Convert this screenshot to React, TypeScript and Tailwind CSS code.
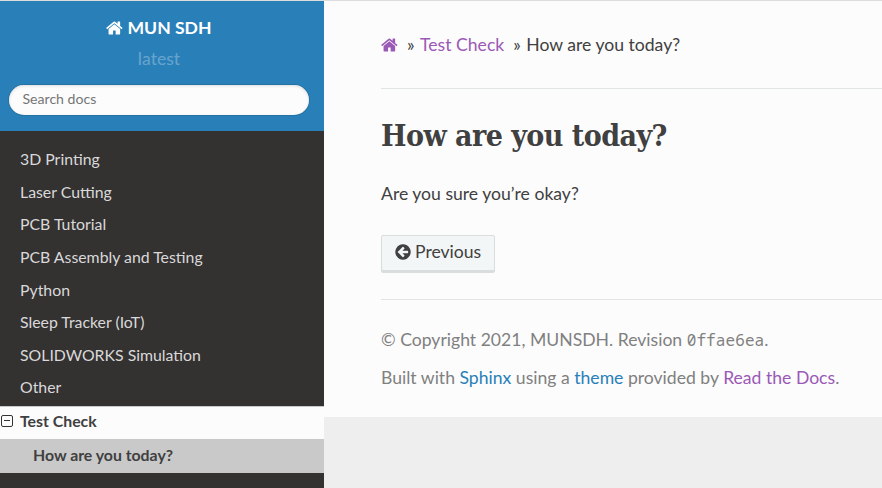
const HOME =
  "M1408 992v480q0 26-19 45t-45 19h-384v-384h-256v384h-384q-26 0-45-19t-19-45v-480q0-1 .5-3t.5-3l575-474 575 474q1 2 1 6zm223-69l-62 74q-8 9-21 11h-3q-13 0-21-7l-692-577-692 577q-12 8-24 7-13-2-21-11l-62-74q-8-10-7-23.5t11-21.5l719-599q32-26 76-26t76 26l244 204v-195q0-14 9-23t23-9h192q14 0 23 9t9 23v408l219 182q10 8 11 21.5t-7 23.5z";
const ARROW =
  "M1408 960v-128q0-26-19-45t-45-19h-502l189-189q19-19 19-45t-19-45l-91-91q-18-18-45-18t-45 18l-362 362-91 91q-18 18-18 45t18 45l91 91 362 362q18 18 45 18t45-18l91-91q18-18 18-45t-18-45l-189-189h502q26 0 45-19t19-45zm256-64q0 209-103 385.5t-279.5 279.5-385.5 103-385.5-103-279.5-279.5-103-385.5 103-385.5 279.5-279.5 385.5-103 385.5 103 279.5 279.5 103 385.5z";

function Icon({ d, className }: { d: string; className: string }) {
  return (
    <svg viewBox="0 0 1792 1792" fill="currentColor" className={className}>
      <path d={d} />
    </svg>
  );
}

const items = [
  "3D Printing",
  "Laser Cutting",
  "PCB Tutorial",
  "PCB Assembly and Testing",
  "Python",
  "Sleep Tracker (IoT)",
  "SOLIDWORKS Simulation",
  "Other",
];

function Sidebar() {
  return (
    <nav className="flex w-[324px] shrink-0 flex-col bg-[#343131]">
      <div className="flex h-[130px] flex-col items-center bg-[#2980b9] pr-[6px]">
        <a className="mt-[14px] flex h-[26px] items-center text-[17.6px] font-bold text-white">
          <Icon d={HOME} className="mr-[3px] size-[18px]" />
          MUN SDH
        </a>
        <div className="mt-[5px] h-[26px] text-[17.6px] leading-[26px] text-white/30">latest</div>
        <div className="mt-[13px] ml-[9px] h-[30px] w-[300px] self-start rounded-full bg-[#fcfcfc] px-[13.5px] text-[14.1px] leading-[28px] text-[#757575] shadow-[inset_0_1px_3px_#ddd,0_0_0_1px_#2472a4]">
          Search docs
        </div>
      </div>
      <ul className="mt-[12px] h-[263px] text-[15.84px] text-[#d9d9d9]">
        {items.map((t) => (
          <li key={t} className="flex h-[32.55px] items-center pl-[20px]">
            {t}
          </li>
        ))}
      </ul>
      <div className="flex h-[33px] items-center border-t border-[#c9c9c9] bg-[#fcfcfc] pb-[4px] text-[15.84px] font-bold text-[#404040]">
        <svg viewBox="0 0 14 14" className="mr-[6px] size-[14px]" fill="none" stroke="#333">
          <rect x="1.5" y="1.5" width="11" height="11" rx="1.5" />
          <path d="M4 6.5h6" />
        </svg>
        Test Check
      </div>
      <div className="flex h-[34px] items-center bg-[#c9c9c9] pb-[2px] pl-[33px] text-[15.84px] font-bold text-[#404040]">
        How are you today?
      </div>
    </nav>
  );
}

export default function App() {
  return (
    <div className="flex h-[488px] w-[882px] flex-col overflow-hidden bg-[#fcfcfc] font-['Lato',sans-serif] text-[17.6px] text-[#404040]">
      <div className="h-px shrink-0 bg-[#dcdcdc]" />
      <div className="flex min-h-0 flex-1">
        <Sidebar />
        <main className="flex flex-1 flex-col">
          <div className="flex h-[416px] flex-col bg-[#fcfcfc] pl-[57px]">
            <div className="mt-[31px] flex h-[26px] items-center whitespace-pre">
              <Icon d={HOME} className="size-[18px] text-[#9b59b6]" />
              <span className="ml-[8px]">» </span>
              <span className="ml-[1px] text-[#9b59b6]">Test Check</span>
              <span className="ml-[9px]">» </span>
              <span className="ml-[1px]">How are you today?</span>
            </div>
            <div className="mt-[30px] h-px shrink-0 bg-[#e1e4e5]" />
            <h1 className="mt-[27px] h-[40px] whitespace-nowrap font-['Roboto_Slab','DejaVu_Serif_Condensed','DejaVu_Serif',serif] text-[30px] leading-[40px] font-bold tracking-[-0.53px] [font-stretch:condensed]">
              How are you today?
            </h1>
            <p className="mt-[25px] h-[26px] leading-[26px]">Are you sure you’re okay?</p>
            <a className="mt-[28px] flex h-[38px] w-[114px] items-center rounded-[2px] border border-[#dadddd] bg-[#f3f6f6] pb-[4px] pl-[12px] shadow-[inset_0_-2px_0_#dadddd]">
              <Icon d={ARROW} className="mr-[3px] size-[18px]" />
              Previous
            </a>
            <div className="mt-[26px] h-px shrink-0 bg-[#e1e4e5]" />
            <p className="mt-[27px] h-[26px] leading-[26px] text-[#808080]">
              © Copyright 2021, MUNSDH. Revision{" "}
              <code className="font-['Noto_Sans_Mono','DejaVu_Sans_Mono',monospace] text-[16px] tracking-[0.1px]">0ffae6ea</code>.
            </p>
            <p className="mt-[12px] h-[26px] leading-[26px] text-[#808080]">
              Built with <a className="text-[#2980b9]">Sphinx</a> using a <a className="text-[#2980b9]">theme</a> provided
              by <a className="text-[#9b59b6]">Read the Docs</a>.
            </p>
          </div>
          <div className="flex-1 bg-[#eeeeee]" />
        </main>
      </div>
    </div>
  );
}
